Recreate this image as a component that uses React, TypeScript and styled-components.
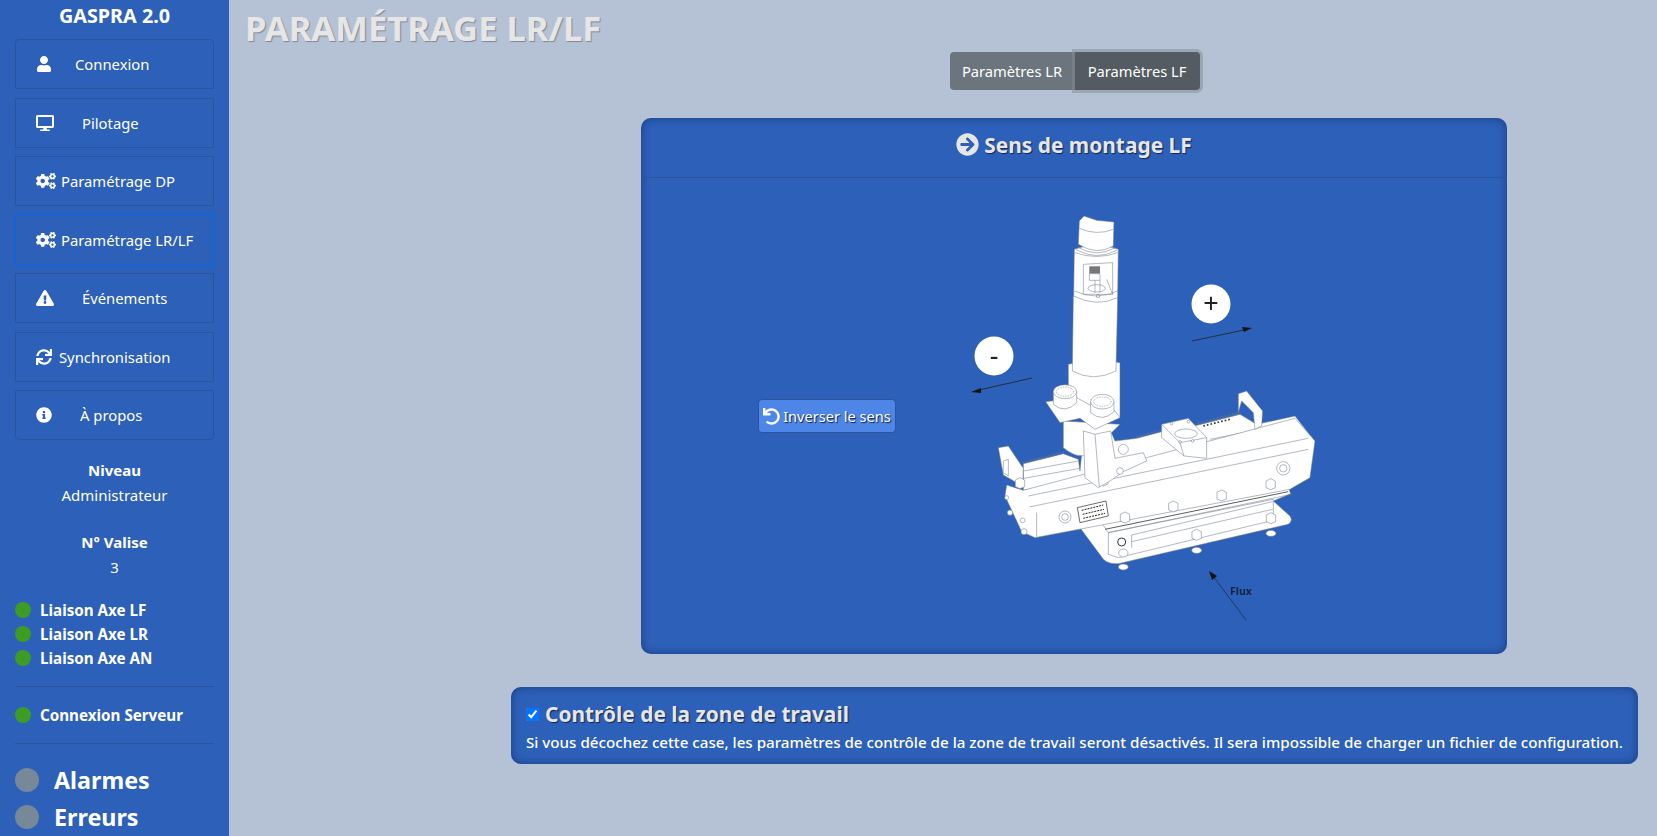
import React from 'react';
import styled, { createGlobalStyle } from 'styled-components';
import {
  FaArrowCircleRight,
  FaCogs,
  FaDesktop,
  FaExclamationTriangle,
  FaInfoCircle,
  FaSync,
  FaUndo,
  FaUser,
} from 'react-icons/fa';

const colors = {
  blue: '#2d60b8',
  blueLine: '#2a549f',
  page: '#b5c2d6',
  white: '#ffffff',
  soft: '#e6e6e6',
  green: '#3e9c25',
  gray: '#778899',
};

const GlobalStyle = createGlobalStyle`
  html, body { margin: 0; height: 100%; overflow: hidden; }
  body {
    background: ${colors.page};
    font-family: "Noto Sans", "Open Sans", sans-serif;
    font-size: 15px;
    color: ${colors.white};
  }
  * { box-sizing: border-box; }
`;

const Page = styled.div`
  display: flex;
  height: 836px;
`;

const Sidebar = styled.aside`
  width: 229px;
  flex-shrink: 0;
  background: ${colors.blue};
  padding: 0 15px;
  display: flex;
  flex-direction: column;
  & > * { flex-shrink: 0; }
`;

const Brand = styled.div`
  height: 39px;
  padding-top: 1px;
  font-size: 19.8px;
  font-weight: 700;
  line-height: 30px;
  text-align: center;
`;

const Nav = styled.nav`
  display: flex;
  flex-direction: column;
  gap: 8.5px;
`;

const NavItem = styled.a<{ $active?: boolean; $gap: number }>`
  height: 50px;
  display: flex;
  align-items: center;
  gap: ${(p) => p.$gap}px;
  padding-left: 20px;
  border: 1px solid ${(p) => (p.$active ? '#0069ee' : colors.blueLine)};
  font-size: 14.8px;
  white-space: nowrap;
  &:first-child { border-radius: 4px 4px 0 0; }
  &:last-child { border-radius: 0 0 4px 4px; }
  svg { flex-shrink: 0; }
`;

const Info = styled.div`
  margin-top: 18px;
  text-align: center;
  line-height: 25px;
  font-size: 15px;
  & + & { margin-top: 22px; }
  b { display: block; }
`;

const LinkList = styled.div`
  margin-top: 18px;
  margin-bottom: 16px;
  display: flex;
  flex-direction: column;
`;

const LinkRow = styled.div`
  height: 24px;
  display: flex;
  align-items: center;
  gap: 9px;
  font-size: 15.2px;
  font-weight: 700;
  white-space: nowrap;
`;

const Dot = styled.span<{ $size: number; $color: string }>`
  width: ${(p) => p.$size}px;
  height: ${(p) => p.$size}px;
  border-radius: 50%;
  flex-shrink: 0;
  background: ${(p) => p.$color};
`;

const Rule = styled.hr`
  width: 100%;
  margin: 0;
  border: 0;
  border-top: 1px solid ${colors.blueLine};
`;

const ServerBlock = styled.div`
  margin: 16px 0;
`;

const AlarmList = styled.div`
  margin-top: 24px;
  display: flex;
  flex-direction: column;
  gap: 13px;
`;

const AlarmRow = styled.div`
  display: flex;
  align-items: center;
  gap: 15px;
  height: 24px;
  font-size: 23.3px;
  font-weight: 700;
  white-space: nowrap;
`;

const Main = styled.main`
  flex: 1;
  min-width: 0;
  padding: 0 19px 0 16px;
`;

const PageTitle = styled.h1`
  margin: 0;
  height: 52px;
  font-size: 34.6px;
  font-weight: 700;
  line-height: 55px;
  white-space: nowrap;
  color: ${colors.soft};
  text-shadow: 1px 1px 1px #7d8796;
`;

const Content = styled.div`
  margin-left: 266px;
  display: flex;
  flex-direction: column;
  align-items: center;
`;

const Tabs = styled.div`
  display: flex;
  height: 38px;
`;

const Tab = styled.button<{ $active?: boolean }>`
  width: 125px;
  height: 38px;
  padding: 0;
  border: 0;
  font: inherit;
  font-size: 14.7px;
  color: ${colors.white};
  background: ${(p) => (p.$active ? '#545b62' : '#6c757d')};
  border-radius: ${(p) => (p.$active ? '0 4px 4px 0' : '4px 0 0 4px')};
  box-shadow: ${(p) => (p.$active ? '0 0 0 3px rgba(130,138,145,.5)' : 'none')};
`;

const Card = styled.section`
  background: ${colors.blue};
  border-radius: 10px;
  box-shadow: inset 0 0 8px rgba(10, 30, 80, 0.55);
`;

const MountCard = styled(Card)`
  width: 866px;
  height: 536px;
  margin: 28px 1px 0 0;
  display: flex;
  flex-direction: column;
`;

const CardHeader = styled.header`
  height: 60px;
  flex-shrink: 0;
  display: flex;
  align-items: center;
  justify-content: center;
  gap: 5px;
  padding-bottom: 6px;
  border-bottom: 1px solid ${colors.blueLine};
  font-size: 20.9px;
  font-weight: 700;
  color: ${colors.soft};
  text-shadow: 1px 1px 1px #14264d;
  svg { font-size: 23px; }
`;

const CardBody = styled.div`
  flex: 1;
  display: flex;
  align-items: center;
  padding-left: 117px;
`;

const InvertButton = styled.button`
  width: 138px;
  height: 34px;
  flex-shrink: 0;
  display: flex;
  align-items: center;
  justify-content: center;
  gap: 3px;
  padding: 0;
  border: 1px solid #2a549f;
  border-radius: 4px;
  background: #4e86e8;
  font: inherit;
  font-size: 14.6px;
  color: ${colors.white};
  text-shadow: 1px 1px 1px #10204a;
  white-space: nowrap;
  svg { font-size: 17px; }
`;

const Drawing = styled.svg`
  width: 400px;
  height: 430px;
  margin-left: 54px;
  flex-shrink: 0;
  filter: blur(0.3px);
`;

const ZoneCard = styled(Card)`
  width: 100%;
  height: 77px;
  margin-top: 33px;
  padding: 13px 15px 0;
`;

const ZoneTitle = styled.label`
  display: flex;
  align-items: center;
  gap: 6px;
  height: 28px;
  font-size: 20.9px;
  font-weight: 700;
  color: ${colors.soft};
  text-shadow: 1px 1px 1px #14264d;
`;

const ZoneCheck = styled.input`
  width: 13px;
  height: 13px;
  margin: 0;
`;

const ZoneText = styled.p`
  margin: 2px 0 0;
  font-size: 15.17px;
  font-weight: 500;
  line-height: 24px;
  white-space: nowrap;
`;

const navItems = [
  { label: 'Connexion', icon: <FaUser size={16} />, gap: 23 },
  { label: 'Pilotage', icon: <FaDesktop size={18} />, gap: 28 },
  { label: 'Paramétrage DP', icon: <FaCogs size={20} />, gap: 5 },
  { label: 'Paramétrage LR/LF', icon: <FaCogs size={20} />, gap: 5, active: true },
  { label: 'Événements', icon: <FaExclamationTriangle size={18} />, gap: 28 },
  { label: 'Synchronisation', icon: <FaSync size={16} />, gap: 7 },
  { label: 'À propos', icon: <FaInfoCircle size={16} />, gap: 28 },
];

const teeth = (x0: number, y0: number, x1: number, y1: number, n: number, h: number) => {
  const pts: string[] = [];
  for (let i = 0; i <= n; i++) {
    const x = x0 + ((x1 - x0) * i) / n;
    const y = y0 + ((y1 - y0) * i) / n;
    pts.push(`${x},${y}`, `${x},${y - h}`);
  }
  return pts.join(' ');
};

const bolts: [number, number][] = [
  [435, 408],
  [580, 375],
  [725, 342],
  [872, 308],
  [650, 460],
  [873, 410],
  [370, 297],
  [120, 305],
];

// machine drawing, coordinates follow the two zoomed crops of the part
const Machine = () => (
  <Drawing viewBox="950 200 400 430">
    <g transform="translate(980 380) scale(.3333)" fill="#fff" stroke="#6f7a8c" strokeWidth="1.6" strokeLinejoin="round">
      <ellipse cx="430" cy="558" rx="15" ry="9" />
      <ellipse cx="650" cy="508" rx="15" ry="9" />
      <ellipse cx="873" cy="457" rx="15" ry="9" />
      <path d="M300 440 L370 535 Q385 550 415 548 L925 430 Q940 420 930 405 L880 360 L932 338 L925 318 Z" />
      <path d="M385 455 L385 520 L415 530 L880 418 L880 355 Z" />
      <path d="M365 425 L385 455 L935 340 M455 462 L878 362 M455 482 L878 385 M455 462 L455 500" fill="none" />
      <path d="M375 445 L925 332" fill="none" stroke="#333" strokeWidth="2.4" />
      <circle cx="425" cy="483" r="12" stroke="#333" strokeWidth="3" />
      <ellipse cx="430" cy="516" rx="14" ry="12" />
      <path d="M130 248 L250 218 L295 235 L300 270 L310 170 L392 150 L405 180 L470 172 L545 152 L655 132 L780 100 L830 130 L945 105 L1000 175 L130 328 Z" />
      <path d="M130 270 L295 240 M132 292 L300 262" fill="none" />
      <path d="M690 175 L815 150 M690 190 L815 165 M690 210 L815 183" fill="none" />
      <path d="M670 135 L750 115" fill="none" stroke="#333" strokeWidth="5" strokeDasharray="5 6" />
      <polyline points={teeth(130, 248, 250, 218, 11, 7)} fill="none" />
      <polyline points={teeth(470, 172, 545, 152, 7, 7)} fill="none" />
      <polyline points={teeth(655, 132, 780, 100, 11, 9)} fill="none" />
      <path d="M80 312 L130 328 L945 112 L1005 180 L990 290 L930 325 L165 470 L125 452 L75 345 Z" />
      <path d="M145 345 L985 172 M148 378 L985 205 M170 395 L170 468" fill="none" />
      <path d="M55 200 L85 195 L130 262 L128 312 L105 302 L70 282 Z" />
      <path d="M70 240 L85 235 L85 285 L70 275 Z" fill="none" />
      <path d="M775 38 L800 30 L848 90 L845 135 L825 145 L820 95 L785 60 L775 95 Z" />
      <path d="M545 130 L625 112 L680 170 L680 232 L612 225 L545 170 Z" />
      <path d="M545 130 L600 185 L680 170 M600 185 L612 225" fill="none" />
      <ellipse cx="618" cy="158" rx="34" ry="14" />
      <circle cx="575" cy="128" r="4" />
      <circle cx="625" cy="122" r="4" />
      <circle cx="600" cy="183" r="4" />
      <circle cx="638" cy="180" r="4" />
      <path d="M292 380 L378 360 L385 405 L300 425 Z" stroke="#222" strokeWidth="2" />
      <path d="M305 388 L370 372 M308 400 L372 385 M310 412 L375 397" fill="none" stroke="#222" strokeWidth="3" strokeDasharray="6 3" />
      <circle cx="255" cy="408" r="18" />
      <circle cx="255" cy="408" r="10" />
      <circle cx="910" cy="262" r="20" />
      <circle cx="910" cy="262" r="11" />
      {bolts.map(([x, y]) => (
        <path key={`${x}-${y}`} d={`M${x - 14} ${y - 8} L${x} ${y - 15} L${x + 14} ${y - 8} L${x + 14} ${y + 12} L${x} ${y + 18} L${x - 14} ${y + 12} Z`} />
      ))}
      <circle cx="80" cy="350" r="6" />
      <circle cx="90" cy="395" r="8" />
      <circle cx="128" cy="418" r="7" />
      <circle cx="132" cy="452" r="9" />
      <path d="M250 120 L250 200 Q290 235 330 220 L420 130 Z" />
      <path d="M310 150 L345 160 L392 150 L405 232 L490 215 L500 240 L430 272 L390 300 L355 320 L315 290 Z" />
      <path d="M345 160 L358 318" fill="none" />
      <circle cx="430" cy="205" r="15" />
      <circle cx="420" cy="270" r="10" />
    </g>
    <g transform="translate(940 200) scale(.3333)" fill="#fff" stroke="#6f7a8c" strokeWidth="1.6" strokeLinejoin="round">
      <path d="M385 490 Q460 470 540 485 L540 650 L385 650 Z" />
      <path d="M400 285 L533 290 L528 510 Q460 545 397 510 Z" />
      <path d="M403 145 Q470 120 535 145 L533 290 Q470 320 401 285 Z" />
      <path d="M405 155 Q470 178 533 155 M403 270 Q470 300 533 270" fill="none" />
      <path d="M418 60 L432 45 L470 58 L522 63 L520 135 Q470 165 415 130 Z" />
      <path d="M418 82 Q470 105 520 85 M412 138 Q470 172 526 140 M408 146 Q470 180 530 148" fill="none" />
      <path d="M430 190 L518 185 L518 280 L430 280 Z" fill="none" />
      <rect x="448" y="196" width="32" height="22" fill="#777" stroke="none" />
      <rect x="448" y="218" width="32" height="20" />
      <ellipse cx="470" cy="262" rx="26" ry="11" fill="none" />
      <path d="M465 238 L465 275 M480 238 L480 275 M500 235 L518 280" fill="none" />
      <circle cx="474" cy="285" r="5" fill="none" />
    </g>
    <g transform="translate(980 380) scale(.3333)" fill="#fff" stroke="#6f7a8c" strokeWidth="1.6" strokeLinejoin="round">
      <path d="M197 62 L240 125 L300 112 L345 145 L420 110 L405 90 L330 72 L290 50 Z" />
      <path d="M220 30 L220 70 Q255 100 290 65 L290 30 Z" />
      <ellipse cx="255" cy="32" rx="35" ry="21" />
      <ellipse cx="255" cy="32" rx="26" ry="14" strokeDasharray="2 3" stroke="#444" />
      <path d="M332 62 L332 95 Q367 125 402 92 L402 62 Z" />
      <ellipse cx="367" cy="62" rx="35" ry="22" />
      <ellipse cx="367" cy="62" rx="26" ry="14" strokeDasharray="2 3" stroke="#444" />
    </g>
    <circle cx="1211" cy="303" r="19.5" fill="#fff" />
    <text x="1211" y="312" fontSize="27" textAnchor="middle" fontFamily="Noto Sans, sans-serif" fill="#222">+</text>
    <circle cx="994" cy="355" r="19.5" fill="#fff" />
    <text x="994" y="364" fontSize="27" textAnchor="middle" fontFamily="Noto Sans, sans-serif" fill="#222">-</text>
    <path d="M1192 340 L1244 329" stroke="#222" strokeWidth=".8" />
    <path d="M1252 327 L1242 326 L1244 331 Z" fill="#111" />
    <path d="M1032 377 L979 389" stroke="#222" strokeWidth=".8" />
    <path d="M971 391 L981 387 L981 392 Z" fill="#111" />
    <path d="M1246 619 L1213 575" stroke="#1c2f55" strokeWidth=".8" />
    <path d="M1209 570 L1217 575 L1212 579 Z" fill="#111" />
    <text x="1230" y="594" fontSize="10.5" fontWeight="700" fontFamily="Noto Sans, sans-serif" fill="#15233f">Flux</text>
  </Drawing>
);

const App: React.FC = () => (
  <>
    <GlobalStyle />
    <Page>
      <Sidebar>
        <Brand>GASPRA 2.0</Brand>
        <Nav>
          {navItems.map((item) => (
            <NavItem key={item.label} $active={item.active} $gap={item.gap}>
              {item.icon}
              {item.label}
            </NavItem>
          ))}
        </Nav>
        <Info>
          <b>Niveau</b>
          Administrateur
        </Info>
        <Info>
          <b>N° Valise</b>
          3
        </Info>
        <LinkList>
          {['Liaison Axe LF', 'Liaison Axe LR', 'Liaison Axe AN'].map((name) => (
            <LinkRow key={name}>
              <Dot $size={16} $color={colors.green} />
              {name}
            </LinkRow>
          ))}
        </LinkList>
        <Rule />
        <ServerBlock>
          <LinkRow>
            <Dot $size={16} $color={colors.green} />
            Connexion Serveur
          </LinkRow>
        </ServerBlock>
        <Rule />
        <AlarmList>
          <AlarmRow>
            <Dot $size={24} $color={colors.gray} />
            Alarmes
          </AlarmRow>
          <AlarmRow>
            <Dot $size={24} $color={colors.gray} />
            Erreurs
          </AlarmRow>
        </AlarmList>
      </Sidebar>
      <Main>
        <PageTitle>PARAMÉTRAGE LR/LF</PageTitle>
        <Content>
          <Tabs>
            <Tab>Paramètres LR</Tab>
            <Tab $active>Paramètres LF</Tab>
          </Tabs>
          <MountCard>
            <CardHeader>
              <FaArrowCircleRight />
              Sens de montage LF
            </CardHeader>
            <CardBody>
              <InvertButton>
                <FaUndo />
                Inverser le sens
              </InvertButton>
              <Machine />
            </CardBody>
          </MountCard>
          <ZoneCard>
            <ZoneTitle>
              <ZoneCheck type="checkbox" defaultChecked />
              Contrôle de la zone de travail
            </ZoneTitle>
            <ZoneText>
              Si vous décochez cette case, les paramètres de contrôle de la zone de travail seront désactivés. Il sera impossible de charger un fichier de configuration.
            </ZoneText>
          </ZoneCard>
        </Content>
      </Main>
    </Page>
  </>
);

export default App;
